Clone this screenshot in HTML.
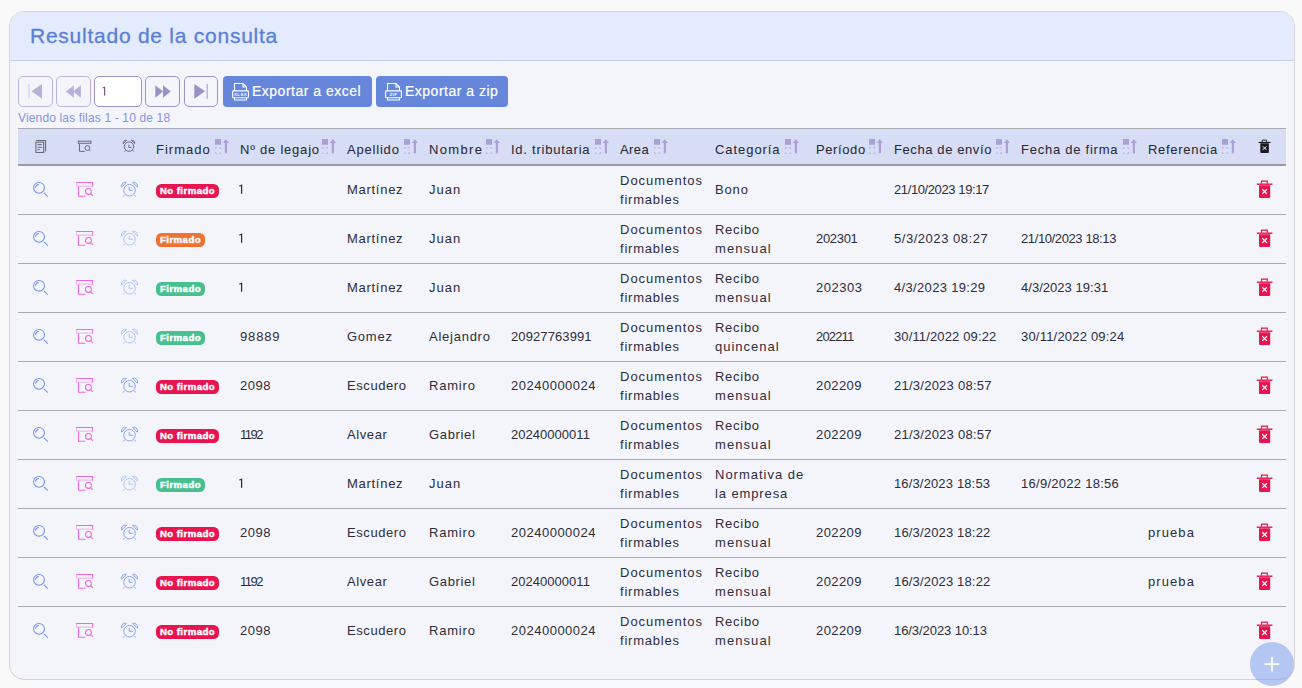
<!DOCTYPE html><html><head><meta charset="utf-8"><style>
*{box-sizing:border-box;margin:0;padding:0}
html,body{width:1302px;height:688px;overflow:hidden;background:#f9f9f9;font-family:"Liberation Sans",sans-serif}
.abs{position:absolute}
.card{position:absolute;left:9px;top:11px;width:1286px;height:669px;border:1px solid #d3d3d8;border-radius:15px;background:#f4f5fb;overflow:hidden}
.chead{position:absolute;left:0;top:0;width:100%;height:49px;background:#e3ebfd;border-bottom:1px solid #c9d1e9}
.title{position:absolute;left:20px;top:12.3px;font-size:21px;line-height:24px;color:#5a7fd8;letter-spacing:0.75px;white-space:nowrap}
.pbtn{position:absolute;top:76px;height:31px;border:1px solid #bdb4dd;border-radius:5px}
.pbtn.d{border-color:#9d92c9}
.inp{position:absolute;top:76px;left:94px;width:48px;height:31px;border:1px solid #9d92c9;border-radius:5px;background:#fff;font-size:12px;color:#4a3050;padding-left:6px;line-height:30px}
.ebtn{position:absolute;top:76px;height:31px;background:#6686dc;border-radius:4px;color:#fff;font-size:14px;letter-spacing:0.5px;white-space:nowrap}
.ebtn span{position:absolute;top:6px;line-height:18px}
.ebtn svg{position:absolute;left:9px;top:6px}
.title{-webkit-text-stroke:0.3px #5a7fd8}
.h{-webkit-text-stroke:0.05px #2a2a36}
.ebtn span{-webkit-text-stroke:0.2px #fff}
.info{position:absolute;left:18px;top:110.5px;font-size:12px;line-height:14px;color:#8393dc;white-space:nowrap;letter-spacing:0.15px}
.thead{position:absolute;left:18px;top:128px;width:1268px;height:38px;background:#d6ddf5;border-top:1px solid #a9a9b1;border-bottom:2px solid #9b9ba3}
.t,.h{position:absolute;font-size:13px;line-height:19.5px;color:#2c2c3a;white-space:nowrap;letter-spacing:0.75px}
.h{color:#2a2a36}
.rl{position:absolute;left:18px;width:1268px;height:1px;background:#a9a9b1}
.badge{position:absolute;left:156px;height:14px;border-radius:5.5px;color:#fff;font-weight:bold;font-size:9.6px;line-height:13px;text-align:center;letter-spacing:0.45px;white-space:nowrap;-webkit-text-stroke:0.45px #fff}
.no{background:#e8134f;width:63px}
.or{background:#f07232;width:49px}
.ok{background:#47bf8e;width:49px}
.ic{position:absolute}
.fab{position:absolute;left:1250px;top:642px;width:44px;height:44px;border-radius:50%;background:rgba(108,145,232,0.47)}
</style></head><body>

<div class="card"><div class="chead"></div><div class="title">Resultado de la consulta</div></div>
<div class="pbtn" style="left:18px;width:35px"><svg class="abs" style="left:-1px;top:-1px" width="35" height="31" viewBox="0 0 35 31"><path d="M11 8v14.7" stroke="#d6d0ea" stroke-width="1.3"/><path d="M24 8v14.7L13.5 15.3z" fill="#b9b0d9"/></svg></div>
<div class="pbtn" style="left:56px;width:35px"><svg class="abs" style="left:-1px;top:-1px" width="35" height="31" viewBox="0 0 35 31"><path d="M17.8 9.2v12.6L9.9 15.5z" fill="#b9b0d9"/><path d="M24.9 9.2v12.6L17 15.5z" fill="#b9b0d9"/></svg></div>
<div class="inp"><svg class="abs" style="left:7px;top:9px" width="6" height="12" viewBox="0 0 6 12"><path d="M0.6 1.9Q1.9 1.6 2.7 1.1V9.6" fill="none" stroke="#5a3a60" stroke-width="1.0"/></svg></div>
<div class="pbtn d" style="left:145px;width:35px"><svg class="abs" style="left:-1px;top:-1px" width="35" height="31" viewBox="0 0 35 31"><path d="M10.3 9.2v12.6L18 15.5z" fill="#9b90c6"/><path d="M18 9.2v12.6L25.7 15.5z" fill="#9b90c6"/></svg></div>
<div class="pbtn d" style="left:184px;width:34px"><svg class="abs" style="left:-1px;top:-1px" width="34" height="31" viewBox="0 0 34 31"><path d="M10.3 8v14.7L21 15.3z" fill="#9b90c6"/><path d="M23.2 8v14.7" stroke="#b3a9d6" stroke-width="1.3"/></svg></div>
<div class="ebtn" style="left:223px;width:149px"><svg width="18" height="19" viewBox="0 0 18 19"><g fill="none" stroke="#fff" stroke-width="1.1"><path d="M2.5 8.9V1.5h8.5l3.5 3.5v3.9"/><path d="M11 1.5v3.5h3.5"/><rect x="0.6" y="8.9" width="15.8" height="6.9" rx="0.8"/><path d="M2.5 15.8v2.2h12v-2.2"/></g><text x="8.5" y="13.8" font-size="4.2" fill="#fff" text-anchor="middle" font-family="Liberation Sans" font-weight="bold">XLSX</text></svg><span style="left:29px">Exportar a excel</span></div>
<div class="ebtn" style="left:376px;width:132px"><svg width="18" height="19" viewBox="0 0 18 19"><g fill="none" stroke="#fff" stroke-width="1.1"><path d="M2.5 8.9V1.5h8.5l3.5 3.5v3.9"/><path d="M11 1.5v3.5h3.5"/><rect x="0.6" y="8.9" width="15.8" height="6.9" rx="0.8"/><path d="M2.5 15.8v2.2h12v-2.2"/></g><text x="8.5" y="13.8" font-size="4.2" fill="#fff" text-anchor="middle" font-family="Liberation Sans" font-weight="bold">ZIP</text></svg><span style="left:29px">Exportar a zip</span></div>
<div class="info">Viendo las filas 1 - 10 de 18</div>
<div class="thead"></div>
<div class="ic" style="left:30px;top:136px"><svg width="24" height="20" viewBox="0 0 24 20"><g fill="none" stroke="#5a5b68" stroke-width="0.95"><path d="M6.1 4.5H15.6V15.4"/><rect x="5.9" y="6.25" width="7.8" height="10.15"/><path d="M7.5 8.6H11.9M7.5 11.3H11.9M7.5 13.5H9.8" stroke-width="0.9"/></g></svg></div>
<div class="ic" style="left:74px;top:136px"><svg width="24" height="20" viewBox="0 0 24 20"><g fill="none" stroke="#5e5f6c" stroke-width="0.9"><path d="M4.4 5.2H16.9M4.4 7.3H16.9M4.4 4.7V7.8M16.9 4.7V7.8"/><path d="M5.5 7.8V15.4H10.8"/><circle cx="13.4" cy="12" r="2.4"/><path d="M15.1 13.7L16.6 15.1"/></g></svg></div>
<div class="ic" style="left:117px;top:136px"><svg width="24" height="20" viewBox="0 0 24 20"><g fill="none" stroke="#5e5f6c" stroke-width="0.9"><circle cx="12" cy="10.6" r="4.7"/><path d="M11.9 8.7V11.4H14.5"/><path d="M6.2 7.6A2.9 2.9 0 0 1 9.6 4.3z"/><path d="M17.8 7.6A2.9 2.9 0 0 0 14.4 4.3z"/><path d="M8.6 14.2L7.2 15.6M15.4 14.2L16.8 15.6"/></g></svg></div>
<div class="ic" style="left:1257.5px;top:139.3px"><svg width="13" height="15" viewBox="0 0 17 19"><path d="M5.5 3.8V1.2h5.8v2.6" fill="none" stroke="#1a1a22" stroke-width="1.2"/><path d="M0.8 4.2h15.6" stroke="#1a1a22" stroke-width="1.4"/><path d="M3 5.2h11.2v11.6a1.2 1.2 0 0 1-1.2 1.2H4.2a1.2 1.2 0 0 1-1.2-1.2z" fill="#1a1a22"/><path d="M6.3 9.3l4.6 4.6M10.9 9.3l-4.6 4.6" stroke="#fff" stroke-width="1.3"/></svg></div>
<div class="h" style="left:156px;top:139.5px"><span style="letter-spacing:1.0px">Firmado</span></div>
<div class="ic" style="left:215px;top:138.7px"><svg width="16" height="17" viewBox="0 0 16 17"><rect x="0" y="0" width="6" height="5.8" fill="#ab9fd6"/><path d="M0.5 9.8V8.5H1.8M4.2 8.5H5.5V9.8M5.5 13.2V14.5H4.2M1.8 14.5H0.5V13.2" fill="none" stroke="#bdb2df" stroke-width="1"/><path d="M10.9 3V14.3" stroke="#ab9fd6" stroke-width="2.2"/><path d="M7.8 4L10.9 0.2L14 4z" fill="#ab9fd6"/></svg></div>
<div class="h" style="left:240px;top:139.5px"><span style="letter-spacing:0.773px">Nº de legajo</span></div>
<div class="ic" style="left:322px;top:138.7px"><svg width="16" height="17" viewBox="0 0 16 17"><rect x="0" y="0" width="6" height="5.8" fill="#ab9fd6"/><path d="M0.5 9.8V8.5H1.8M4.2 8.5H5.5V9.8M5.5 13.2V14.5H4.2M1.8 14.5H0.5V13.2" fill="none" stroke="#bdb2df" stroke-width="1"/><path d="M10.9 3V14.3" stroke="#ab9fd6" stroke-width="2.2"/><path d="M7.8 4L10.9 0.2L14 4z" fill="#ab9fd6"/></svg></div>
<div class="h" style="left:347px;top:139.5px"><span style="letter-spacing:0.8px">Apellido</span></div>
<div class="ic" style="left:404px;top:138.7px"><svg width="16" height="17" viewBox="0 0 16 17"><rect x="0" y="0" width="6" height="5.8" fill="#ab9fd6"/><path d="M0.5 9.8V8.5H1.8M4.2 8.5H5.5V9.8M5.5 13.2V14.5H4.2M1.8 14.5H0.5V13.2" fill="none" stroke="#bdb2df" stroke-width="1"/><path d="M10.9 3V14.3" stroke="#ab9fd6" stroke-width="2.2"/><path d="M7.8 4L10.9 0.2L14 4z" fill="#ab9fd6"/></svg></div>
<div class="h" style="left:429px;top:139.5px"><span style="letter-spacing:1.36px">Nombre</span></div>
<div class="ic" style="left:486px;top:138.7px"><svg width="16" height="17" viewBox="0 0 16 17"><rect x="0" y="0" width="6" height="5.8" fill="#ab9fd6"/><path d="M0.5 9.8V8.5H1.8M4.2 8.5H5.5V9.8M5.5 13.2V14.5H4.2M1.8 14.5H0.5V13.2" fill="none" stroke="#bdb2df" stroke-width="1"/><path d="M10.9 3V14.3" stroke="#ab9fd6" stroke-width="2.2"/><path d="M7.8 4L10.9 0.2L14 4z" fill="#ab9fd6"/></svg></div>
<div class="h" style="left:511px;top:139.5px"><span style="letter-spacing:0.762px">Id. tributaria</span></div>
<div class="ic" style="left:595px;top:138.7px"><svg width="16" height="17" viewBox="0 0 16 17"><rect x="0" y="0" width="6" height="5.8" fill="#ab9fd6"/><path d="M0.5 9.8V8.5H1.8M4.2 8.5H5.5V9.8M5.5 13.2V14.5H4.2M1.8 14.5H0.5V13.2" fill="none" stroke="#bdb2df" stroke-width="1"/><path d="M10.9 3V14.3" stroke="#ab9fd6" stroke-width="2.2"/><path d="M7.8 4L10.9 0.2L14 4z" fill="#ab9fd6"/></svg></div>
<div class="h" style="left:620px;top:139.5px"><span style="letter-spacing:0.433px">Area</span></div>
<div class="ic" style="left:654px;top:138.7px"><svg width="16" height="17" viewBox="0 0 16 17"><rect x="0" y="0" width="6" height="5.8" fill="#ab9fd6"/><path d="M0.5 9.8V8.5H1.8M4.2 8.5H5.5V9.8M5.5 13.2V14.5H4.2M1.8 14.5H0.5V13.2" fill="none" stroke="#bdb2df" stroke-width="1"/><path d="M10.9 3V14.3" stroke="#ab9fd6" stroke-width="2.2"/><path d="M7.8 4L10.9 0.2L14 4z" fill="#ab9fd6"/></svg></div>
<div class="h" style="left:715px;top:139.5px"><span style="letter-spacing:0.938px">Categoría</span></div>
<div class="ic" style="left:785.3px;top:138.7px"><svg width="16" height="17" viewBox="0 0 16 17"><rect x="0" y="0" width="6" height="5.8" fill="#ab9fd6"/><path d="M0.5 9.8V8.5H1.8M4.2 8.5H5.5V9.8M5.5 13.2V14.5H4.2M1.8 14.5H0.5V13.2" fill="none" stroke="#bdb2df" stroke-width="1"/><path d="M10.9 3V14.3" stroke="#ab9fd6" stroke-width="2.2"/><path d="M7.8 4L10.9 0.2L14 4z" fill="#ab9fd6"/></svg></div>
<div class="h" style="left:816px;top:139.5px"><span style="letter-spacing:0.6px">Período</span></div>
<div class="ic" style="left:869px;top:138.7px"><svg width="16" height="17" viewBox="0 0 16 17"><rect x="0" y="0" width="6" height="5.8" fill="#ab9fd6"/><path d="M0.5 9.8V8.5H1.8M4.2 8.5H5.5V9.8M5.5 13.2V14.5H4.2M1.8 14.5H0.5V13.2" fill="none" stroke="#bdb2df" stroke-width="1"/><path d="M10.9 3V14.3" stroke="#ab9fd6" stroke-width="2.2"/><path d="M7.8 4L10.9 0.2L14 4z" fill="#ab9fd6"/></svg></div>
<div class="h" style="left:894px;top:139.5px"><span style="letter-spacing:0.6px">Fecha de envío</span></div>
<div class="ic" style="left:996px;top:138.7px"><svg width="16" height="17" viewBox="0 0 16 17"><rect x="0" y="0" width="6" height="5.8" fill="#ab9fd6"/><path d="M0.5 9.8V8.5H1.8M4.2 8.5H5.5V9.8M5.5 13.2V14.5H4.2M1.8 14.5H0.5V13.2" fill="none" stroke="#bdb2df" stroke-width="1"/><path d="M10.9 3V14.3" stroke="#ab9fd6" stroke-width="2.2"/><path d="M7.8 4L10.9 0.2L14 4z" fill="#ab9fd6"/></svg></div>
<div class="h" style="left:1021px;top:139.5px"><span style="letter-spacing:0.754px">Fecha de firma</span></div>
<div class="ic" style="left:1123px;top:138.7px"><svg width="16" height="17" viewBox="0 0 16 17"><rect x="0" y="0" width="6" height="5.8" fill="#ab9fd6"/><path d="M0.5 9.8V8.5H1.8M4.2 8.5H5.5V9.8M5.5 13.2V14.5H4.2M1.8 14.5H0.5V13.2" fill="none" stroke="#bdb2df" stroke-width="1"/><path d="M10.9 3V14.3" stroke="#ab9fd6" stroke-width="2.2"/><path d="M7.8 4L10.9 0.2L14 4z" fill="#ab9fd6"/></svg></div>
<div class="h" style="left:1148px;top:139.5px"><span style="letter-spacing:0.7px">Referencia</span></div>
<div class="ic" style="left:1221.6px;top:138.7px"><svg width="16" height="17" viewBox="0 0 16 17"><rect x="0" y="0" width="6" height="5.8" fill="#ab9fd6"/><path d="M0.5 9.8V8.5H1.8M4.2 8.5H5.5V9.8M5.5 13.2V14.5H4.2M1.8 14.5H0.5V13.2" fill="none" stroke="#bdb2df" stroke-width="1"/><path d="M10.9 3V14.3" stroke="#ab9fd6" stroke-width="2.2"/><path d="M7.8 4L10.9 0.2L14 4z" fill="#ab9fd6"/></svg></div>
<div class="rl" style="top:214px"></div>
<div class="ic" style="left:28px;top:178px"><svg width="24" height="22" viewBox="0 0 24 22"><g fill="none" stroke="#6f8ef0" stroke-width="1.05"><circle cx="11" cy="9.85" r="5.45"/><path d="M7.5 9.6A3.5 3.5 0 0 1 10.7 6.4"/><path d="M15.9 14.9l3.9 3.8"/></g></svg></div>
<div class="ic" style="left:72px;top:178px"><svg width="24" height="22" viewBox="0 0 24 22"><g fill="none" stroke-width="1.05"><path d="M4.5 8.1H21.1" stroke="#f3b3eb"/><path d="M4.5 4V8.6" stroke="#f3b3eb"/><path d="M4.3 4.5H21.1M20.6 4V8.6" stroke="#ee66e0"/><path d="M6.5 8.6V18.2H13.4" stroke="#ee66e0"/><circle cx="16.45" cy="13.4" r="2.95" stroke="#ee66e0"/><path d="M18.6 15.6L20.9 17.8" stroke="#ee66e0"/></g></svg></div>
<div class="ic" style="left:118px;top:178px"><svg width="24" height="22" viewBox="0 0 24 22"><g fill="none" stroke="#809eec" stroke-width="0.95"><circle cx="11.5" cy="12.2" r="5.75"/><path d="M11.2 8.8V12.3H14.9"/><path d="M3.6 9.2A3.9 3.9 0 0 1 8.4 4.3z"/><path d="M19.4 9.2A3.9 3.9 0 0 0 14.6 4.3z"/><path d="M6.6 16.8L5.2 18.6M16.4 16.8L17.8 18.6"/></g></svg></div>
<div class="badge no" style="top:184px">No firmado</div>
<svg class="ic" style="left:238px;top:184px" width="6" height="12" viewBox="0 0 6 12"><path d="M1.2 2Q2.6 1.7 3.6 1.2V9.8" fill="none" stroke="#2c2c3a" stroke-width="1.25"/></svg>
<div class="t" style="left:347px;top:180.25px"><span style="letter-spacing:0.714px">Martínez</span></div>
<div class="t" style="left:429px;top:180.25px"><span style="letter-spacing:1.0px">Juan</span></div>
<div class="t" style="left:620px;top:170.5px"><span style="letter-spacing:1.0px">Documentos</span><br><span style="letter-spacing:0.787px">firmables</span></div>
<div class="t" style="left:715px;top:180.25px"><span style="letter-spacing:0.833px">Bono</span></div>
<div class="t" style="left:894px;top:180.25px"><span style="letter-spacing:-0.393px">21/10/2023 19:17</span></div>
<div class="ic" style="left:1255.5px;top:180.3px"><svg width="17" height="19" viewBox="0 0 17 19"><path d="M5.5 3.8V1.2h5.8v2.6" fill="none" stroke="#e8134f" stroke-width="1.2"/><path d="M0.8 4.2h15.6" stroke="#e8134f" stroke-width="1.4"/><path d="M3 5.2h11.2v11.6a1.2 1.2 0 0 1-1.2 1.2H4.2a1.2 1.2 0 0 1-1.2-1.2z" fill="#e8134f"/><path d="M6.3 9.3l4.6 4.6M10.9 9.3l-4.6 4.6" stroke="#fff" stroke-width="1.3"/></svg></div>
<div class="rl" style="top:263px"></div>
<div class="ic" style="left:28px;top:227px"><svg width="24" height="22" viewBox="0 0 24 22"><g fill="none" stroke="#6f8ef0" stroke-width="1.05"><circle cx="11" cy="9.85" r="5.45"/><path d="M7.5 9.6A3.5 3.5 0 0 1 10.7 6.4"/><path d="M15.9 14.9l3.9 3.8"/></g></svg></div>
<div class="ic" style="left:72px;top:227px"><svg width="24" height="22" viewBox="0 0 24 22"><g fill="none" stroke-width="1.05"><path d="M4.5 8.1H21.1" stroke="#f3b3eb"/><path d="M4.5 4V8.6" stroke="#f3b3eb"/><path d="M4.3 4.5H21.1M20.6 4V8.6" stroke="#ee66e0"/><path d="M6.5 8.6V18.2H13.4" stroke="#ee66e0"/><circle cx="16.45" cy="13.4" r="2.95" stroke="#ee66e0"/><path d="M18.6 15.6L20.9 17.8" stroke="#ee66e0"/></g></svg></div>
<div class="ic" style="left:118px;top:227px"><svg width="24" height="22" viewBox="0 0 24 22"><g fill="none" stroke="#abc0f4" stroke-width="0.95"><circle cx="11.5" cy="12.2" r="5.75"/><path d="M11.2 8.8V12.3H14.9"/><path d="M3.6 9.2A3.9 3.9 0 0 1 8.4 4.3z"/><path d="M19.4 9.2A3.9 3.9 0 0 0 14.6 4.3z"/><path d="M6.6 16.8L5.2 18.6M16.4 16.8L17.8 18.6"/></g></svg></div>
<div class="badge or" style="top:233px">Firmado</div>
<svg class="ic" style="left:238px;top:233px" width="6" height="12" viewBox="0 0 6 12"><path d="M1.2 2Q2.6 1.7 3.6 1.2V9.8" fill="none" stroke="#2c2c3a" stroke-width="1.25"/></svg>
<div class="t" style="left:347px;top:229.25px"><span style="letter-spacing:0.714px">Martínez</span></div>
<div class="t" style="left:429px;top:229.25px"><span style="letter-spacing:1.0px">Juan</span></div>
<div class="t" style="left:620px;top:219.5px"><span style="letter-spacing:1.0px">Documentos</span><br><span style="letter-spacing:0.787px">firmables</span></div>
<div class="t" style="left:715px;top:219.5px"><span style="letter-spacing:0.72px">Recibo</span><br><span style="letter-spacing:1.083px">mensual</span></div>
<div class="t" style="left:816px;top:229.25px"><span style="letter-spacing:-0.32px">202301</span></div>
<div class="t" style="left:894px;top:229.25px"><span style="letter-spacing:0.538px">5/3/2023 08:27</span></div>
<div class="t" style="left:1021px;top:229.25px"><span style="letter-spacing:-0.387px">21/10/2023 18:13</span></div>
<div class="ic" style="left:1255.5px;top:229.3px"><svg width="17" height="19" viewBox="0 0 17 19"><path d="M5.5 3.8V1.2h5.8v2.6" fill="none" stroke="#e8134f" stroke-width="1.2"/><path d="M0.8 4.2h15.6" stroke="#e8134f" stroke-width="1.4"/><path d="M3 5.2h11.2v11.6a1.2 1.2 0 0 1-1.2 1.2H4.2a1.2 1.2 0 0 1-1.2-1.2z" fill="#e8134f"/><path d="M6.3 9.3l4.6 4.6M10.9 9.3l-4.6 4.6" stroke="#fff" stroke-width="1.3"/></svg></div>
<div class="rl" style="top:312px"></div>
<div class="ic" style="left:28px;top:276px"><svg width="24" height="22" viewBox="0 0 24 22"><g fill="none" stroke="#6f8ef0" stroke-width="1.05"><circle cx="11" cy="9.85" r="5.45"/><path d="M7.5 9.6A3.5 3.5 0 0 1 10.7 6.4"/><path d="M15.9 14.9l3.9 3.8"/></g></svg></div>
<div class="ic" style="left:72px;top:276px"><svg width="24" height="22" viewBox="0 0 24 22"><g fill="none" stroke-width="1.05"><path d="M4.5 8.1H21.1" stroke="#f3b3eb"/><path d="M4.5 4V8.6" stroke="#f3b3eb"/><path d="M4.3 4.5H21.1M20.6 4V8.6" stroke="#ee66e0"/><path d="M6.5 8.6V18.2H13.4" stroke="#ee66e0"/><circle cx="16.45" cy="13.4" r="2.95" stroke="#ee66e0"/><path d="M18.6 15.6L20.9 17.8" stroke="#ee66e0"/></g></svg></div>
<div class="ic" style="left:118px;top:276px"><svg width="24" height="22" viewBox="0 0 24 22"><g fill="none" stroke="#abc0f4" stroke-width="0.95"><circle cx="11.5" cy="12.2" r="5.75"/><path d="M11.2 8.8V12.3H14.9"/><path d="M3.6 9.2A3.9 3.9 0 0 1 8.4 4.3z"/><path d="M19.4 9.2A3.9 3.9 0 0 0 14.6 4.3z"/><path d="M6.6 16.8L5.2 18.6M16.4 16.8L17.8 18.6"/></g></svg></div>
<div class="badge ok" style="top:282px">Firmado</div>
<svg class="ic" style="left:238px;top:282px" width="6" height="12" viewBox="0 0 6 12"><path d="M1.2 2Q2.6 1.7 3.6 1.2V9.8" fill="none" stroke="#2c2c3a" stroke-width="1.25"/></svg>
<div class="t" style="left:347px;top:278.25px"><span style="letter-spacing:0.714px">Martínez</span></div>
<div class="t" style="left:429px;top:278.25px"><span style="letter-spacing:1.0px">Juan</span></div>
<div class="t" style="left:620px;top:268.5px"><span style="letter-spacing:1.0px">Documentos</span><br><span style="letter-spacing:0.787px">firmables</span></div>
<div class="t" style="left:715px;top:268.5px"><span style="letter-spacing:0.72px">Recibo</span><br><span style="letter-spacing:1.083px">mensual</span></div>
<div class="t" style="left:816px;top:278.25px"><span style="letter-spacing:0.52px">202303</span></div>
<div class="t" style="left:894px;top:278.25px"><span style="letter-spacing:0.331px">4/3/2023 19:29</span></div>
<div class="t" style="left:1021px;top:278.25px"><span style="letter-spacing:0.031px">4/3/2023 19:31</span></div>
<div class="ic" style="left:1255.5px;top:278.3px"><svg width="17" height="19" viewBox="0 0 17 19"><path d="M5.5 3.8V1.2h5.8v2.6" fill="none" stroke="#e8134f" stroke-width="1.2"/><path d="M0.8 4.2h15.6" stroke="#e8134f" stroke-width="1.4"/><path d="M3 5.2h11.2v11.6a1.2 1.2 0 0 1-1.2 1.2H4.2a1.2 1.2 0 0 1-1.2-1.2z" fill="#e8134f"/><path d="M6.3 9.3l4.6 4.6M10.9 9.3l-4.6 4.6" stroke="#fff" stroke-width="1.3"/></svg></div>
<div class="rl" style="top:361px"></div>
<div class="ic" style="left:28px;top:325px"><svg width="24" height="22" viewBox="0 0 24 22"><g fill="none" stroke="#6f8ef0" stroke-width="1.05"><circle cx="11" cy="9.85" r="5.45"/><path d="M7.5 9.6A3.5 3.5 0 0 1 10.7 6.4"/><path d="M15.9 14.9l3.9 3.8"/></g></svg></div>
<div class="ic" style="left:72px;top:325px"><svg width="24" height="22" viewBox="0 0 24 22"><g fill="none" stroke-width="1.05"><path d="M4.5 8.1H21.1" stroke="#f3b3eb"/><path d="M4.5 4V8.6" stroke="#f3b3eb"/><path d="M4.3 4.5H21.1M20.6 4V8.6" stroke="#ee66e0"/><path d="M6.5 8.6V18.2H13.4" stroke="#ee66e0"/><circle cx="16.45" cy="13.4" r="2.95" stroke="#ee66e0"/><path d="M18.6 15.6L20.9 17.8" stroke="#ee66e0"/></g></svg></div>
<div class="ic" style="left:118px;top:325px"><svg width="24" height="22" viewBox="0 0 24 22"><g fill="none" stroke="#abc0f4" stroke-width="0.95"><circle cx="11.5" cy="12.2" r="5.75"/><path d="M11.2 8.8V12.3H14.9"/><path d="M3.6 9.2A3.9 3.9 0 0 1 8.4 4.3z"/><path d="M19.4 9.2A3.9 3.9 0 0 0 14.6 4.3z"/><path d="M6.6 16.8L5.2 18.6M16.4 16.8L17.8 18.6"/></g></svg></div>
<div class="badge ok" style="top:331px">Firmado</div>
<div class="t" style="left:240px;top:327.25px"><span style="letter-spacing:0.85px">98889</span></div>
<div class="t" style="left:347px;top:327.25px"><span style="letter-spacing:0.75px">Gomez</span></div>
<div class="t" style="left:429px;top:327.25px"><span style="letter-spacing:0.75px">Alejandro</span></div>
<div class="t" style="left:511px;top:327.25px"><span style="letter-spacing:0.1px">20927763991</span></div>
<div class="t" style="left:620px;top:317.5px"><span style="letter-spacing:1.0px">Documentos</span><br><span style="letter-spacing:0.787px">firmables</span></div>
<div class="t" style="left:715px;top:317.5px"><span style="letter-spacing:0.72px">Recibo</span><br><span style="letter-spacing:1.0px">quincenal</span></div>
<div class="t" style="left:816px;top:327.25px"><span style="letter-spacing:-0.84px">202211</span></div>
<div class="t" style="left:894px;top:327.25px"><span style="letter-spacing:0.133px">30/11/2022 09:22</span></div>
<div class="t" style="left:1021px;top:327.25px"><span style="letter-spacing:0.2px">30/11/2022 09:24</span></div>
<div class="ic" style="left:1255.5px;top:327.3px"><svg width="17" height="19" viewBox="0 0 17 19"><path d="M5.5 3.8V1.2h5.8v2.6" fill="none" stroke="#e8134f" stroke-width="1.2"/><path d="M0.8 4.2h15.6" stroke="#e8134f" stroke-width="1.4"/><path d="M3 5.2h11.2v11.6a1.2 1.2 0 0 1-1.2 1.2H4.2a1.2 1.2 0 0 1-1.2-1.2z" fill="#e8134f"/><path d="M6.3 9.3l4.6 4.6M10.9 9.3l-4.6 4.6" stroke="#fff" stroke-width="1.3"/></svg></div>
<div class="rl" style="top:410px"></div>
<div class="ic" style="left:28px;top:374px"><svg width="24" height="22" viewBox="0 0 24 22"><g fill="none" stroke="#6f8ef0" stroke-width="1.05"><circle cx="11" cy="9.85" r="5.45"/><path d="M7.5 9.6A3.5 3.5 0 0 1 10.7 6.4"/><path d="M15.9 14.9l3.9 3.8"/></g></svg></div>
<div class="ic" style="left:72px;top:374px"><svg width="24" height="22" viewBox="0 0 24 22"><g fill="none" stroke-width="1.05"><path d="M4.5 8.1H21.1" stroke="#f3b3eb"/><path d="M4.5 4V8.6" stroke="#f3b3eb"/><path d="M4.3 4.5H21.1M20.6 4V8.6" stroke="#ee66e0"/><path d="M6.5 8.6V18.2H13.4" stroke="#ee66e0"/><circle cx="16.45" cy="13.4" r="2.95" stroke="#ee66e0"/><path d="M18.6 15.6L20.9 17.8" stroke="#ee66e0"/></g></svg></div>
<div class="ic" style="left:118px;top:374px"><svg width="24" height="22" viewBox="0 0 24 22"><g fill="none" stroke="#809eec" stroke-width="0.95"><circle cx="11.5" cy="12.2" r="5.75"/><path d="M11.2 8.8V12.3H14.9"/><path d="M3.6 9.2A3.9 3.9 0 0 1 8.4 4.3z"/><path d="M19.4 9.2A3.9 3.9 0 0 0 14.6 4.3z"/><path d="M6.6 16.8L5.2 18.6M16.4 16.8L17.8 18.6"/></g></svg></div>
<div class="badge no" style="top:380px">No firmado</div>
<div class="t" style="left:240px;top:376.25px"><span style="letter-spacing:0.533px">2098</span></div>
<div class="t" style="left:347px;top:376.25px"><span style="letter-spacing:0.571px">Escudero</span></div>
<div class="t" style="left:429px;top:376.25px"><span style="letter-spacing:0.8px">Ramiro</span></div>
<div class="t" style="left:511px;top:376.25px"><span style="letter-spacing:0.5px">20240000024</span></div>
<div class="t" style="left:620px;top:366.5px"><span style="letter-spacing:1.0px">Documentos</span><br><span style="letter-spacing:0.787px">firmables</span></div>
<div class="t" style="left:715px;top:366.5px"><span style="letter-spacing:0.72px">Recibo</span><br><span style="letter-spacing:1.083px">mensual</span></div>
<div class="t" style="left:816px;top:376.25px"><span style="letter-spacing:0.4px">202209</span></div>
<div class="t" style="left:894px;top:376.25px"><span style="letter-spacing:0.25px">21/3/2023 08:57</span></div>
<div class="ic" style="left:1255.5px;top:376.3px"><svg width="17" height="19" viewBox="0 0 17 19"><path d="M5.5 3.8V1.2h5.8v2.6" fill="none" stroke="#e8134f" stroke-width="1.2"/><path d="M0.8 4.2h15.6" stroke="#e8134f" stroke-width="1.4"/><path d="M3 5.2h11.2v11.6a1.2 1.2 0 0 1-1.2 1.2H4.2a1.2 1.2 0 0 1-1.2-1.2z" fill="#e8134f"/><path d="M6.3 9.3l4.6 4.6M10.9 9.3l-4.6 4.6" stroke="#fff" stroke-width="1.3"/></svg></div>
<div class="rl" style="top:459px"></div>
<div class="ic" style="left:28px;top:423px"><svg width="24" height="22" viewBox="0 0 24 22"><g fill="none" stroke="#6f8ef0" stroke-width="1.05"><circle cx="11" cy="9.85" r="5.45"/><path d="M7.5 9.6A3.5 3.5 0 0 1 10.7 6.4"/><path d="M15.9 14.9l3.9 3.8"/></g></svg></div>
<div class="ic" style="left:72px;top:423px"><svg width="24" height="22" viewBox="0 0 24 22"><g fill="none" stroke-width="1.05"><path d="M4.5 8.1H21.1" stroke="#f3b3eb"/><path d="M4.5 4V8.6" stroke="#f3b3eb"/><path d="M4.3 4.5H21.1M20.6 4V8.6" stroke="#ee66e0"/><path d="M6.5 8.6V18.2H13.4" stroke="#ee66e0"/><circle cx="16.45" cy="13.4" r="2.95" stroke="#ee66e0"/><path d="M18.6 15.6L20.9 17.8" stroke="#ee66e0"/></g></svg></div>
<div class="ic" style="left:118px;top:423px"><svg width="24" height="22" viewBox="0 0 24 22"><g fill="none" stroke="#809eec" stroke-width="0.95"><circle cx="11.5" cy="12.2" r="5.75"/><path d="M11.2 8.8V12.3H14.9"/><path d="M3.6 9.2A3.9 3.9 0 0 1 8.4 4.3z"/><path d="M19.4 9.2A3.9 3.9 0 0 0 14.6 4.3z"/><path d="M6.6 16.8L5.2 18.6M16.4 16.8L17.8 18.6"/></g></svg></div>
<div class="badge no" style="top:429px">No firmado</div>
<div class="t" style="left:240px;top:425.25px"><span style="letter-spacing:-1.5px">1192</span></div>
<div class="t" style="left:347px;top:425.25px"><span style="letter-spacing:0.6px">Alvear</span></div>
<div class="t" style="left:429px;top:425.25px"><span style="letter-spacing:0.667px">Gabriel</span></div>
<div class="t" style="left:511px;top:425.25px"><span style="letter-spacing:0.03px">20240000011</span></div>
<div class="t" style="left:620px;top:415.5px"><span style="letter-spacing:1.0px">Documentos</span><br><span style="letter-spacing:0.787px">firmables</span></div>
<div class="t" style="left:715px;top:415.5px"><span style="letter-spacing:0.72px">Recibo</span><br><span style="letter-spacing:1.083px">mensual</span></div>
<div class="t" style="left:816px;top:425.25px"><span style="letter-spacing:0.4px">202209</span></div>
<div class="t" style="left:894px;top:425.25px"><span style="letter-spacing:0.25px">21/3/2023 08:57</span></div>
<div class="ic" style="left:1255.5px;top:425.3px"><svg width="17" height="19" viewBox="0 0 17 19"><path d="M5.5 3.8V1.2h5.8v2.6" fill="none" stroke="#e8134f" stroke-width="1.2"/><path d="M0.8 4.2h15.6" stroke="#e8134f" stroke-width="1.4"/><path d="M3 5.2h11.2v11.6a1.2 1.2 0 0 1-1.2 1.2H4.2a1.2 1.2 0 0 1-1.2-1.2z" fill="#e8134f"/><path d="M6.3 9.3l4.6 4.6M10.9 9.3l-4.6 4.6" stroke="#fff" stroke-width="1.3"/></svg></div>
<div class="rl" style="top:508px"></div>
<div class="ic" style="left:28px;top:472px"><svg width="24" height="22" viewBox="0 0 24 22"><g fill="none" stroke="#6f8ef0" stroke-width="1.05"><circle cx="11" cy="9.85" r="5.45"/><path d="M7.5 9.6A3.5 3.5 0 0 1 10.7 6.4"/><path d="M15.9 14.9l3.9 3.8"/></g></svg></div>
<div class="ic" style="left:72px;top:472px"><svg width="24" height="22" viewBox="0 0 24 22"><g fill="none" stroke-width="1.05"><path d="M4.5 8.1H21.1" stroke="#f3b3eb"/><path d="M4.5 4V8.6" stroke="#f3b3eb"/><path d="M4.3 4.5H21.1M20.6 4V8.6" stroke="#ee66e0"/><path d="M6.5 8.6V18.2H13.4" stroke="#ee66e0"/><circle cx="16.45" cy="13.4" r="2.95" stroke="#ee66e0"/><path d="M18.6 15.6L20.9 17.8" stroke="#ee66e0"/></g></svg></div>
<div class="ic" style="left:118px;top:472px"><svg width="24" height="22" viewBox="0 0 24 22"><g fill="none" stroke="#abc0f4" stroke-width="0.95"><circle cx="11.5" cy="12.2" r="5.75"/><path d="M11.2 8.8V12.3H14.9"/><path d="M3.6 9.2A3.9 3.9 0 0 1 8.4 4.3z"/><path d="M19.4 9.2A3.9 3.9 0 0 0 14.6 4.3z"/><path d="M6.6 16.8L5.2 18.6M16.4 16.8L17.8 18.6"/></g></svg></div>
<div class="badge ok" style="top:478px">Firmado</div>
<svg class="ic" style="left:238px;top:478px" width="6" height="12" viewBox="0 0 6 12"><path d="M1.2 2Q2.6 1.7 3.6 1.2V9.8" fill="none" stroke="#2c2c3a" stroke-width="1.25"/></svg>
<div class="t" style="left:347px;top:474.25px"><span style="letter-spacing:0.714px">Martínez</span></div>
<div class="t" style="left:429px;top:474.25px"><span style="letter-spacing:1.0px">Juan</span></div>
<div class="t" style="left:620px;top:464.5px"><span style="letter-spacing:1.0px">Documentos</span><br><span style="letter-spacing:0.787px">firmables</span></div>
<div class="t" style="left:715px;top:464.5px"><span style="letter-spacing:1.0px">Normativa de</span><br><span style="letter-spacing:0.889px">la empresa</span></div>
<div class="t" style="left:894px;top:474.25px"><span style="letter-spacing:0.143px">16/3/2023 18:53</span></div>
<div class="t" style="left:1021px;top:474.25px"><span style="letter-spacing:0.271px">16/9/2022 18:56</span></div>
<div class="ic" style="left:1255.5px;top:474.3px"><svg width="17" height="19" viewBox="0 0 17 19"><path d="M5.5 3.8V1.2h5.8v2.6" fill="none" stroke="#e8134f" stroke-width="1.2"/><path d="M0.8 4.2h15.6" stroke="#e8134f" stroke-width="1.4"/><path d="M3 5.2h11.2v11.6a1.2 1.2 0 0 1-1.2 1.2H4.2a1.2 1.2 0 0 1-1.2-1.2z" fill="#e8134f"/><path d="M6.3 9.3l4.6 4.6M10.9 9.3l-4.6 4.6" stroke="#fff" stroke-width="1.3"/></svg></div>
<div class="rl" style="top:557px"></div>
<div class="ic" style="left:28px;top:521px"><svg width="24" height="22" viewBox="0 0 24 22"><g fill="none" stroke="#6f8ef0" stroke-width="1.05"><circle cx="11" cy="9.85" r="5.45"/><path d="M7.5 9.6A3.5 3.5 0 0 1 10.7 6.4"/><path d="M15.9 14.9l3.9 3.8"/></g></svg></div>
<div class="ic" style="left:72px;top:521px"><svg width="24" height="22" viewBox="0 0 24 22"><g fill="none" stroke-width="1.05"><path d="M4.5 8.1H21.1" stroke="#f3b3eb"/><path d="M4.5 4V8.6" stroke="#f3b3eb"/><path d="M4.3 4.5H21.1M20.6 4V8.6" stroke="#ee66e0"/><path d="M6.5 8.6V18.2H13.4" stroke="#ee66e0"/><circle cx="16.45" cy="13.4" r="2.95" stroke="#ee66e0"/><path d="M18.6 15.6L20.9 17.8" stroke="#ee66e0"/></g></svg></div>
<div class="ic" style="left:118px;top:521px"><svg width="24" height="22" viewBox="0 0 24 22"><g fill="none" stroke="#809eec" stroke-width="0.95"><circle cx="11.5" cy="12.2" r="5.75"/><path d="M11.2 8.8V12.3H14.9"/><path d="M3.6 9.2A3.9 3.9 0 0 1 8.4 4.3z"/><path d="M19.4 9.2A3.9 3.9 0 0 0 14.6 4.3z"/><path d="M6.6 16.8L5.2 18.6M16.4 16.8L17.8 18.6"/></g></svg></div>
<div class="badge no" style="top:527px">No firmado</div>
<div class="t" style="left:240px;top:523.25px"><span style="letter-spacing:0.533px">2098</span></div>
<div class="t" style="left:347px;top:523.25px"><span style="letter-spacing:0.571px">Escudero</span></div>
<div class="t" style="left:429px;top:523.25px"><span style="letter-spacing:0.8px">Ramiro</span></div>
<div class="t" style="left:511px;top:523.25px"><span style="letter-spacing:0.5px">20240000024</span></div>
<div class="t" style="left:620px;top:513.5px"><span style="letter-spacing:1.0px">Documentos</span><br><span style="letter-spacing:0.787px">firmables</span></div>
<div class="t" style="left:715px;top:513.5px"><span style="letter-spacing:0.72px">Recibo</span><br><span style="letter-spacing:1.083px">mensual</span></div>
<div class="t" style="left:816px;top:523.25px"><span style="letter-spacing:0.4px">202209</span></div>
<div class="t" style="left:894px;top:523.25px"><span style="letter-spacing:0.164px">16/3/2023 18:22</span></div>
<div class="t" style="left:1148px;top:523.25px"><span style="letter-spacing:1.08px">prueba</span></div>
<div class="ic" style="left:1255.5px;top:523.3px"><svg width="17" height="19" viewBox="0 0 17 19"><path d="M5.5 3.8V1.2h5.8v2.6" fill="none" stroke="#e8134f" stroke-width="1.2"/><path d="M0.8 4.2h15.6" stroke="#e8134f" stroke-width="1.4"/><path d="M3 5.2h11.2v11.6a1.2 1.2 0 0 1-1.2 1.2H4.2a1.2 1.2 0 0 1-1.2-1.2z" fill="#e8134f"/><path d="M6.3 9.3l4.6 4.6M10.9 9.3l-4.6 4.6" stroke="#fff" stroke-width="1.3"/></svg></div>
<div class="rl" style="top:606px"></div>
<div class="ic" style="left:28px;top:570px"><svg width="24" height="22" viewBox="0 0 24 22"><g fill="none" stroke="#6f8ef0" stroke-width="1.05"><circle cx="11" cy="9.85" r="5.45"/><path d="M7.5 9.6A3.5 3.5 0 0 1 10.7 6.4"/><path d="M15.9 14.9l3.9 3.8"/></g></svg></div>
<div class="ic" style="left:72px;top:570px"><svg width="24" height="22" viewBox="0 0 24 22"><g fill="none" stroke-width="1.05"><path d="M4.5 8.1H21.1" stroke="#f3b3eb"/><path d="M4.5 4V8.6" stroke="#f3b3eb"/><path d="M4.3 4.5H21.1M20.6 4V8.6" stroke="#ee66e0"/><path d="M6.5 8.6V18.2H13.4" stroke="#ee66e0"/><circle cx="16.45" cy="13.4" r="2.95" stroke="#ee66e0"/><path d="M18.6 15.6L20.9 17.8" stroke="#ee66e0"/></g></svg></div>
<div class="ic" style="left:118px;top:570px"><svg width="24" height="22" viewBox="0 0 24 22"><g fill="none" stroke="#809eec" stroke-width="0.95"><circle cx="11.5" cy="12.2" r="5.75"/><path d="M11.2 8.8V12.3H14.9"/><path d="M3.6 9.2A3.9 3.9 0 0 1 8.4 4.3z"/><path d="M19.4 9.2A3.9 3.9 0 0 0 14.6 4.3z"/><path d="M6.6 16.8L5.2 18.6M16.4 16.8L17.8 18.6"/></g></svg></div>
<div class="badge no" style="top:576px">No firmado</div>
<div class="t" style="left:240px;top:572.25px"><span style="letter-spacing:-1.5px">1192</span></div>
<div class="t" style="left:347px;top:572.25px"><span style="letter-spacing:0.6px">Alvear</span></div>
<div class="t" style="left:429px;top:572.25px"><span style="letter-spacing:0.667px">Gabriel</span></div>
<div class="t" style="left:511px;top:572.25px"><span style="letter-spacing:0.03px">20240000011</span></div>
<div class="t" style="left:620px;top:562.5px"><span style="letter-spacing:1.0px">Documentos</span><br><span style="letter-spacing:0.787px">firmables</span></div>
<div class="t" style="left:715px;top:562.5px"><span style="letter-spacing:0.72px">Recibo</span><br><span style="letter-spacing:1.083px">mensual</span></div>
<div class="t" style="left:816px;top:572.25px"><span style="letter-spacing:0.4px">202209</span></div>
<div class="t" style="left:894px;top:572.25px"><span style="letter-spacing:0.164px">16/3/2023 18:22</span></div>
<div class="t" style="left:1148px;top:572.25px"><span style="letter-spacing:1.08px">prueba</span></div>
<div class="ic" style="left:1255.5px;top:572.3px"><svg width="17" height="19" viewBox="0 0 17 19"><path d="M5.5 3.8V1.2h5.8v2.6" fill="none" stroke="#e8134f" stroke-width="1.2"/><path d="M0.8 4.2h15.6" stroke="#e8134f" stroke-width="1.4"/><path d="M3 5.2h11.2v11.6a1.2 1.2 0 0 1-1.2 1.2H4.2a1.2 1.2 0 0 1-1.2-1.2z" fill="#e8134f"/><path d="M6.3 9.3l4.6 4.6M10.9 9.3l-4.6 4.6" stroke="#fff" stroke-width="1.3"/></svg></div>
<div class="ic" style="left:28px;top:619px"><svg width="24" height="22" viewBox="0 0 24 22"><g fill="none" stroke="#6f8ef0" stroke-width="1.05"><circle cx="11" cy="9.85" r="5.45"/><path d="M7.5 9.6A3.5 3.5 0 0 1 10.7 6.4"/><path d="M15.9 14.9l3.9 3.8"/></g></svg></div>
<div class="ic" style="left:72px;top:619px"><svg width="24" height="22" viewBox="0 0 24 22"><g fill="none" stroke-width="1.05"><path d="M4.5 8.1H21.1" stroke="#f3b3eb"/><path d="M4.5 4V8.6" stroke="#f3b3eb"/><path d="M4.3 4.5H21.1M20.6 4V8.6" stroke="#ee66e0"/><path d="M6.5 8.6V18.2H13.4" stroke="#ee66e0"/><circle cx="16.45" cy="13.4" r="2.95" stroke="#ee66e0"/><path d="M18.6 15.6L20.9 17.8" stroke="#ee66e0"/></g></svg></div>
<div class="ic" style="left:118px;top:619px"><svg width="24" height="22" viewBox="0 0 24 22"><g fill="none" stroke="#809eec" stroke-width="0.95"><circle cx="11.5" cy="12.2" r="5.75"/><path d="M11.2 8.8V12.3H14.9"/><path d="M3.6 9.2A3.9 3.9 0 0 1 8.4 4.3z"/><path d="M19.4 9.2A3.9 3.9 0 0 0 14.6 4.3z"/><path d="M6.6 16.8L5.2 18.6M16.4 16.8L17.8 18.6"/></g></svg></div>
<div class="badge no" style="top:625px">No firmado</div>
<div class="t" style="left:240px;top:621.25px"><span style="letter-spacing:0.533px">2098</span></div>
<div class="t" style="left:347px;top:621.25px"><span style="letter-spacing:0.571px">Escudero</span></div>
<div class="t" style="left:429px;top:621.25px"><span style="letter-spacing:0.8px">Ramiro</span></div>
<div class="t" style="left:511px;top:621.25px"><span style="letter-spacing:0.5px">20240000024</span></div>
<div class="t" style="left:620px;top:611.5px"><span style="letter-spacing:1.0px">Documentos</span><br><span style="letter-spacing:0.787px">firmables</span></div>
<div class="t" style="left:715px;top:611.5px"><span style="letter-spacing:0.72px">Recibo</span><br><span style="letter-spacing:1.083px">mensual</span></div>
<div class="t" style="left:816px;top:621.25px"><span style="letter-spacing:0.4px">202209</span></div>
<div class="t" style="left:894px;top:621.25px"><span style="letter-spacing:-0.071px">16/3/2023 10:13</span></div>
<div class="ic" style="left:1255.5px;top:621.3px"><svg width="17" height="19" viewBox="0 0 17 19"><path d="M5.5 3.8V1.2h5.8v2.6" fill="none" stroke="#e8134f" stroke-width="1.2"/><path d="M0.8 4.2h15.6" stroke="#e8134f" stroke-width="1.4"/><path d="M3 5.2h11.2v11.6a1.2 1.2 0 0 1-1.2 1.2H4.2a1.2 1.2 0 0 1-1.2-1.2z" fill="#e8134f"/><path d="M6.3 9.3l4.6 4.6M10.9 9.3l-4.6 4.6" stroke="#fff" stroke-width="1.3"/></svg></div>
<div class="fab"><svg class="abs" style="left:14px;top:14px" width="17" height="17" viewBox="0 0 17 17"><path d="M8 1v14.4M0.6 8.2h14.6" stroke="#fff" stroke-width="1.7"/></svg></div>
</body></html>
